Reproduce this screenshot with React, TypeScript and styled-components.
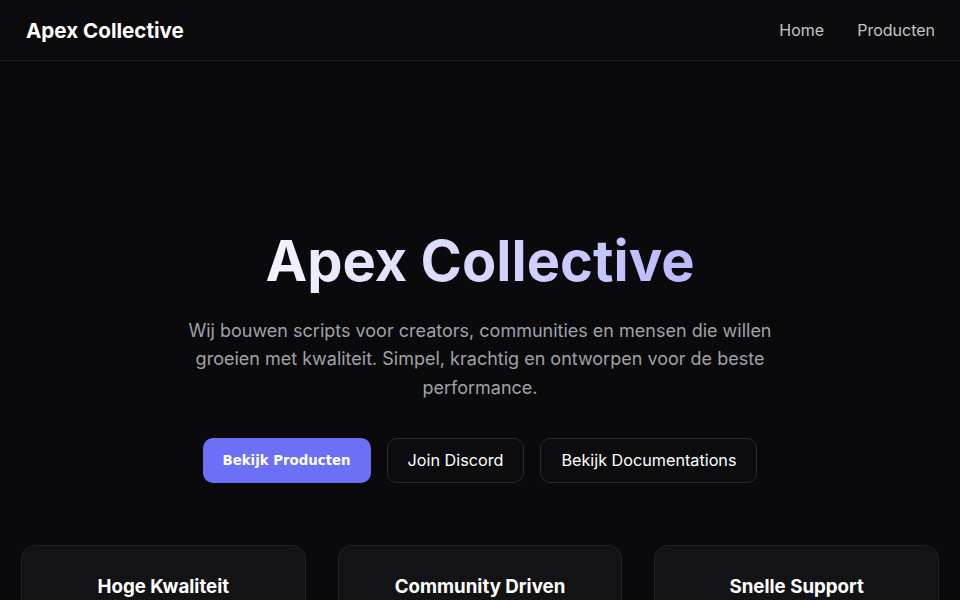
import styled, { createGlobalStyle } from 'styled-components'

const GlobalStyle = createGlobalStyle`
  html, body {
    margin: 0;
    padding: 0;
    background-color: #0a0a0c;
    color: #ffffff;
    font-family: Inter, "Noto Sans", sans-serif;
  }

  * {
    box-sizing: border-box;
  }
`

const Page = styled.div`
  min-height: 100vh;
  background-color: #0a0a0c;
`

const Header = styled.header`
  height: 61px;
  display: flex;
  align-items: center;
  justify-content: space-between;
  padding: 0 25px 0 26px;
  background-color: #0b0b0d;
  border-bottom: 1px solid #1b1b1f;
`

const Logo = styled.a`
  font-size: 20.6px;
  font-weight: 700;
  color: #ffffff;
  text-decoration: none;
`

const Nav = styled.nav`
  display: flex;
  gap: 33px;
`

const NavLink = styled.a`
  font-size: 16px;
  color: #c4c4c8;
  text-decoration: none;
`

const Hero = styled.section`
  display: flex;
  flex-direction: column;
  align-items: center;
  text-align: center;
  padding: 170px 20px 0;
`

const Title = styled.h1`
  margin: 0;
  font-size: 56px;
  font-weight: 700;
  line-height: 1.1;
  background: linear-gradient(90deg, #f3f3ff 0%, #b9b9ff 100%);
  -webkit-background-clip: text;
  background-clip: text;
  color: transparent;
`

const Description = styled.p`
  margin: 24px 0 0;
  max-width: 600px;
  font-size: 18px;
  line-height: 1.6;
  color: #a1a1aa;
`

const Actions = styled.div`
  display: flex;
  gap: 16px;
  margin-top: 35px;
`

const PrimaryButton = styled.button`
  height: 45px;
  padding: 0 20px;
  border: none;
  border-radius: 10px;
  background-color: #6b70f6;
  color: #ffffff;
  font-family: "DejaVu Sans", sans-serif;
  font-size: 13.333px;
  font-weight: 700;
`

const OutlineButton = styled.a`
  display: inline-flex;
  align-items: center;
  height: 45px;
  padding: 0 20px;
  border: 1px solid #2a2a2f;
  border-radius: 10px;
  background-color: #0c0c0e;
  color: #ffffff;
  font-size: 16.2px;
  text-decoration: none;
`

const Features = styled.section`
  display: grid;
  grid-template-columns: repeat(3, 1fr);
  gap: 32px;
  padding: 0 21px;
  margin-top: 62px;
`

const Card = styled.div`
  height: 120px;
  padding: 29px 24px;
  border: 1px solid #222226;
  border-radius: 14px;
  background-color: #131316;
  text-align: center;
`

const CardTitle = styled.h3`
  margin: 0;
  font-size: 18.7px;
  font-weight: 700;
  color: #ffffff;
`

const features = ['Hoge Kwaliteit', 'Community Driven', 'Snelle Support']

const App = () => {
  return (
    <Page>
      <GlobalStyle />
      <Header>
        <Logo href="#">Apex Collective</Logo>
        <Nav>
          <NavLink href="#">Home</NavLink>
          <NavLink href="#">Producten</NavLink>
        </Nav>
      </Header>

      <Hero>
        <Title>Apex Collective</Title>
        <Description>
          Wij bouwen scripts voor creators, communities en mensen die willen groeien met
          kwaliteit. Simpel, krachtig en ontworpen voor de beste performance.
        </Description>
        <Actions>
          <PrimaryButton>Bekijk Producten</PrimaryButton>
          <OutlineButton href="#">Join Discord</OutlineButton>
          <OutlineButton href="#">Bekijk Documentations</OutlineButton>
        </Actions>
      </Hero>

      <Features>
        {features.map((title) => (
          <Card key={title}>
            <CardTitle>{title}</CardTitle>
          </Card>
        ))}
      </Features>
    </Page>
  )
}

export default App
